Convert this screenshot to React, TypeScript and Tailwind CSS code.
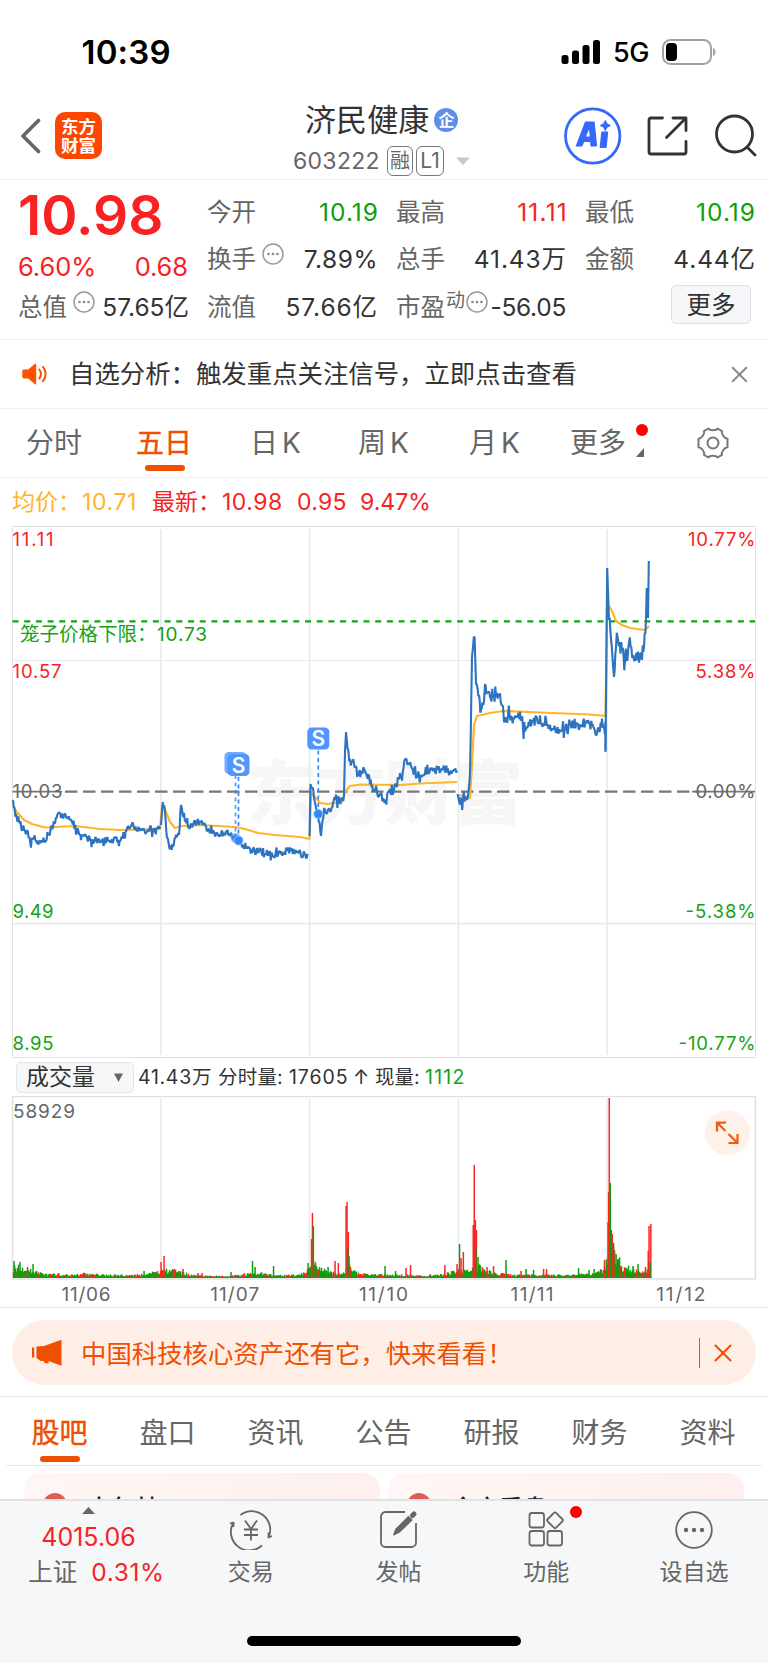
import type { ReactNode } from "react";
import { X } from "lucide-react";

type Point = [number, number];

// seeded noise so the lines stay the same between renders
function createRandom(seed: number) {
  let s = seed;
  return () => {
    s = (s * 16807) % 2147483647;
    return s / 2147483647;
  };
}

// INTRADAY PRICE (one list per trading day)
const priceDays: { amp: number; points: Point[] }[] = [
  { amp: 6.5, points: [[12.5, 800], [14.5, 815], [19, 820], [22, 833], [27, 832], [31, 844], [33, 838], [37, 840], [39, 842], [45, 839], [49, 833], [53, 825], [58, 817], [61, 815], [68, 816], [72, 820], [76, 829], [81, 837], [90, 840], [105, 840], [115, 841], [122, 838], [127, 828], [131, 825], [140, 829], [150, 829], [158, 829], [160, 828]] },
  { amp: 6.5, points: [[161, 825], [162.8, 802], [165, 818], [167, 836], [171, 848], [173, 843], [179, 833], [181, 807], [184, 816], [188, 828], [192, 824], [201, 821], [206, 828], [212, 834], [218, 834], [226, 832], [233, 836], [238, 840], [243, 844], [250, 850], [260, 852], [270, 853], [278, 855], [283, 852], [290, 850], [295, 853], [303, 854], [307.5, 857]] },
  { amp: 7.5, points: [[309.6, 836], [310.5, 784], [314, 796], [318, 815], [321, 832], [324, 812], [330, 810], [336, 798], [341, 803], [344, 796], [345, 752], [346, 732], [347.5, 748], [350, 762], [354, 763], [358, 775], [364, 770], [370, 781], [377, 791], [384, 803], [388, 792], [394, 791], [400, 775], [402, 780], [405, 760], [408, 765], [412, 768], [416, 775], [422, 776], [428, 772], [435, 771], [442, 769], [450, 770], [457, 771]] },
  { amp: 9, points: [[457.5, 794], [459, 801], [463, 799], [467, 801], [470, 775], [472, 660], [473.8, 637], [474.6, 637], [476, 684], [479, 697], [481, 708], [484, 698], [485, 684], [487, 695], [493, 697], [500, 698], [503, 705], [504, 722], [508, 712], [512, 719], [520, 716], [525, 733], [530, 722], [540, 720], [550, 727], [560, 730], [570, 724], [580, 726], [586, 722], [592, 728], [597, 733], [602, 723], [605, 726]] },
  { amp: 11, points: [[605.5, 750], [607.2, 568], [609, 620], [611, 635], [613, 660], [614, 677], [616, 645], [619, 648], [622, 648], [625, 664], [629, 640], [633, 655], [636, 657], [642, 657], [644, 645], [646, 625], [646.7, 588], [648, 618], [648.8, 561]] },
];

const averageDays: Point[][] = [
  [[12.5, 805], [17, 812], [24, 820], [32, 824], [45, 827.5], [75, 826], [100, 829], [120, 830], [160, 829], [162, 806], [165, 809], [170, 822], [175, 828], [182, 826], [200, 825], [235, 827], [245, 829], [258, 833], [275, 835], [300, 837], [309.5, 839], [311, 793], [316, 798], [320, 803], [327, 804], [342, 802], [345, 792], [350, 786], [360, 784.5], [400, 785], [420, 783.5], [457, 782]],
  [[459, 795], [467, 797], [470, 798], [472, 765], [474, 725], [477, 716], [490, 713], [503, 711], [540, 712.5], [590, 714.5], [605.5, 716], [607, 605], [609, 606], [612, 611], [616, 621], [622, 625], [630, 628], [645, 630], [649, 626]],
];

function buildPricePath() {
  const rand = createRandom(77);
  return priceDays.map(({ amp, points }) => {
    let d = `M${points[0][0]} ${points[0][1]}`;
    for (let i = 1; i < points.length; i++) {
      const [x0, y0] = points[i - 1];
      const [x1, y1] = points[i];
      const steps = Math.max(1, Math.round((x1 - x0) / 0.75));
      for (let s = 1; s <= steps; s++) {
        const t = s / steps;
        const noise = steps > 2 ? (rand() - 0.5) * amp * (rand() > 0.85 ? 2.4 : 1.1) : 0;
        d += `L${(x0 + (x1 - x0) * t).toFixed(1)} ${(y0 + (y1 - y0) * t + noise).toFixed(1)}`;
      }
    }
    return d;
  });
}

// VOLUME
const volumeEnvelope: Point[] = [
  [13, 14], [24, 14], [32, 11], [38, 7], [45, 5], [70, 4], [85, 5.5], [100, 4], [140, 4], [155, 7], [165, 9], [171, 12], [178, 7], [184, 6], [195, 3], [230, 2.5], [245, 5], [262, 6], [275, 3], [295, 4], [306, 8], [313, 19], [320, 11], [330, 9], [338, 4], [344, 7], [349, 18], [353, 9], [360, 5], [385, 4], [405, 4], [415, 3], [440, 4], [455, 8], [463, 11], [468, 8], [475, 14], [480, 14], [487, 10], [495, 6], [515, 4], [560, 3.5], [590, 5], [603, 10], [612, 40], [618, 24], [622, 15], [632, 11], [645, 7], [649, 10],
];

const volumeSpikes: [number, number, "r" | "g"][] = [
  [14, 17, "g"], [20, 16, "g"], [33, 14, "g"], [58.5, 5, "r"], [144, 7, "g"], [161, 16, "r"], [164, 22, "r"], [183, 9, "r"], [198, 5, "r"], [202, 5, "r"],
  [231, 6, "g"], [252.5, 17, "g"], [255, 11, "g"], [273.5, 12, "g"], [308, 15, "g"], [311.5, 39, "r"], [312.4, 65, "r"], [313.3, 52, "g"],
  [328, 11, "g"], [335, 17, "r"], [338.3, 15, "r"], [346, 72, "r"], [347, 76, "r"], [348.3, 46, "r"], [347.6, 30, "g"], [349, 22, "g"], [385, 12, "g"],
  [395.5, 7, "g"], [406, 10, "r"], [410.5, 13, "r"], [444.8, 13, "r"], [457, 14, "r"], [459.5, 34, "g"], [461, 20, "r"], [463.3, 26, "r"], [473.2, 53, "r"], [474.2, 113, "r"],
  [475.3, 58, "r"], [476.4, 48, "r"], [475.8, 30, "g"], [478, 21, "g"], [487, 11, "r"], [493.5, 12, "r"], [506, 18, "g"], [521, 7, "r"], [526, 9, "g"], [533.5, 8, "g"],
  [543.5, 9, "r"], [546.5, 9, "r"], [578.5, 10, "g"], [589, 8, "g"], [594, 9, "g"], [604.5, 18, "r"], [608, 56, "r"], [608.6, 86, "r"], [609.2, 180, "r"], [610.2, 95, "g"],
  [611.3, 48, "g"], [612.2, 44, "r"], [613.5, 32, "g"], [616, 24, "g"], [619, 19, "g"], [633, 12, "g"], [638, 14, "g"], [645.5, 11, "r"], [648.2, 27, "r"],
  [649, 52, "r"], [650.8, 54, "r"], [650, 16, "g"],
];

function buildVolumeBars() {
  const rand = createRandom(4211);
  const bars: { x: number; h: number; red: boolean }[] = [];
  for (let x = 13.5; x < 650; x += 1) {
    const i = volumeEnvelope.findIndex(([px]) => px >= x);
    const [x1, h1] = volumeEnvelope[i < 0 ? volumeEnvelope.length - 1 : i];
    const [x0, h0] = volumeEnvelope[Math.max(0, (i < 0 ? volumeEnvelope.length : i) - 1)];
    const t = x1 === x0 ? 1 : Math.min(1, (x - x0) / (x1 - x0));
    const base = h0 + (h1 - h0) * t;
    bars.push({ x, h: Math.max(1.5, base * (0.4 + rand() * 0.6)), red: rand() > 0.7 });
  }
  volumeSpikes.forEach(([x, h, c]) => bars.push({ x, h, red: c === "r" }));
  return bars;
}

const pricePaths = buildPricePath();
const volumeBars = buildVolumeBars();
const dayLines = [161, 309.5, 458.5, 607];
const axisLeft = [
  { y: 545.5, text: "11.11", w: 41, color: "#f82222" },
  { y: 678, text: "10.57", w: 49, color: "#f82222" },
  { y: 798, text: "10.03", w: 50, color: "#666666" },
  { y: 918, text: "9.49", w: 41, color: "#13a313" },
  { y: 1050, text: "8.95", w: 41, color: "#13a313" },
];
const axisRight = [
  { y: 545.5, text: "10.77%", w: 67.5, color: "#f82222" },
  { y: 678, text: "5.38%", w: 60, color: "#f82222" },
  { y: 798, text: "0.00%", w: 60, color: "#666666" },
  { y: 918, text: "-5.38%", w: 70, color: "#13a313" },
  { y: 1050, text: "-10.77%", w: 77, color: "#13a313" },
];

export default function App() {
  return (
    <div className="flex h-[1663px] w-[768px] flex-col overflow-hidden bg-white font-['Inter','Noto_Sans_CJK_SC',sans-serif] text-[#333]">
      <StatusBar />
      <Header />
      <QuotePanel />

      {/* NOTICE */}
      <div className="flex h-[69px] shrink-0 items-center border-b border-[#efefef] pl-[21px] pr-[15px]">
        <svg className="h-6 w-7" viewBox="0 0 28 24" fill="none">
          <path d="M3 7.5h4.2L14 1.800c.6-.5 1.200-.2 1.200.5v19.400c0 .7-.6 1-1.200.5l-6.800-5.700H3c-1 0-1.700-.7-1.700-1.700V9.200c0-1 .7-1.700 1.700-1.700Z" fill="#ff5000" />
          <path d="M18.300 7.500c2 2.700 2 6.300 0 9M22 4.800c3.500 4.300 3.500 10.100 0 14.400" stroke="#ff5000" strokeWidth="2" strokeLinecap="round" />
        </svg>
        <span className="ml-[20px] text-[25.4px] leading-none text-[#333]">自选分析：触发重点关注信号，立即点击查看</span>
        <X className="ml-auto size-[27px] text-[#888]" strokeWidth={1.7} />
      </div>

      <PeriodTabs />

      {/* CHART LEGEND */}
      <div className="flex h-[48px] shrink-0 items-center pl-[12px] pt-px text-[23px] leading-none">
        <span className="w-[70px] text-[#ffb52b]">均价：</span>
        <span className="w-[70px] tracking-[0.6px] text-[#ffb52b]">10.71</span>
        <span className="w-[70px] text-[#f82222]">最新：</span>
        <span className="w-[75px] tracking-[0.5px] text-[#f82222]">10.98</span>
        <span className="w-[63px] tracking-[0.3px] text-[#f82222]">0.95</span>
        <span className="text-[#f82222]">9.47%</span>
      </div>

      <PriceChart />

      {/* VOLUME TOOLBAR */}
      <div className="flex h-[38px] shrink-0 items-center pl-[16px] text-[19.5px] leading-none">
        <div className="mr-[4px] flex h-[31px] w-[118px] items-center rounded-[5px] border border-[#e2e4e8] bg-[#f6f7f9] pl-[9px] pt-px text-[23px]">
          成交量
          <svg className="ml-[19px] h-[9px] w-[9px]" viewBox="0 0 9 9">
            <path d="M0 .5h9L4.500 9Z" fill="#666" />
          </svg>
        </div>
        <div className="flex pt-[2px]">
          <span className="w-[80px] tracking-[0.7px]">41.43万</span>
          <span className="w-[71px] tracking-[0.2px]">分时量:</span>
          <span className="w-[64px] tracking-[0.9px]">17605</span>
          <span className="w-[22px]">↑</span>
          <span className="w-[50px]">现量:</span>
          <span className="tracking-[1.200px] text-[#13a313]">1112</span>
        </div>
      </div>

      <VolumeChart />

      {/* BANNER */}
      <div className="h-[89px] shrink-0 border-b border-[#e8eaee] px-3 pt-[12px]">
        <div className="flex h-[65px] items-center rounded-[33px] bg-[#feeee6] pl-[19px] pr-[18px] text-[#ee5000]">
          <svg className="h-[28px] w-[32px]" viewBox="0 0 32 28" fill="#ee5000">
            <path d="M1 8.500h2.200v10H1ZM5.500 7.500 13 7 30.500.800v26L17.500 22v2.300h-3.800l-1-2.300H9.500L5.500 19Z" />
          </svg>
          <span className="ml-[18px] pt-[3px] text-[25.400px] leading-none">中国科技核心资产还有它，快来看看！</span>
          <span className="ml-auto h-[30px] w-[1.500px] bg-[#ee5000]" />
          <X className="ml-[8px] size-[30px]" strokeWidth={1.6} />
        </div>
      </div>

      <SectionTabs />

      <div className="flex h-[33px] shrink-0 gap-[8px] overflow-hidden pl-[24px] pt-[7px]">
        <FeedCard title="大包林" />
        <FeedCard title="全方看盘" />
      </div>

      <BottomBar />
    </div>
  );
}

function StatusBar() {
  return (
    <div className="flex h-[92px] shrink-0 items-center pl-[81.500px] pr-[52px] pt-[11px]">
      <span className="pt-px text-[33px] font-semibold leading-none tracking-[0.2px] text-black">10:39</span>
      <svg className="ml-auto h-[26px] w-[40px]" viewBox="0 0 40 26">
        <rect x="0.500" y="16" width="7" height="9" rx="2.500" />
        <rect x="11" y="11.500" width="7" height="13.500" rx="2.500" />
        <rect x="21.500" y="6" width="7" height="19" rx="2.500" />
        <rect x="32" y="1" width="7" height="24" rx="2.500" />
      </svg>
      <span className="ml-[12px] w-[49px] pt-[2px] text-[27px] font-medium leading-none tracking-[-0.500px] text-black">5G</span>
      <svg className="h-[26px] w-[54px]" viewBox="0 0 54 26">
        <rect x="1" y="1" width="48" height="24" rx="7.500" fill="none" stroke="#a3a3a3" strokeWidth="2" />
        <rect x="4" y="4" width="11" height="18" rx="4" />
        <path d="M51 9c3.300.800 3.300 7.200 0 8Z" fill="#a3a3a3" />
      </svg>
    </div>
  );
}

function Header() {
  return (
    <div className="flex h-[88px] shrink-0 items-center border-b-[1.500px] border-[#ededed] pl-[20px]">
      <svg className="h-[36px] w-[22px]" viewBox="0 0 22 36" fill="none">
        <path d="M18.500 2.500 3 18l15.500 15.500" stroke="#666" strokeWidth="3.600" strokeLinecap="round" strokeLinejoin="round" />
      </svg>
      <div className="ml-[13px] flex size-[47px] flex-col items-center justify-center rounded-[10px] bg-[#ff4600] text-[17.500px] font-bold leading-[19px] text-white">
        <span>东方</span>
        <span>财富</span>
      </div>
      <div className="ml-[191px] flex w-[180px] flex-col pt-[6px]">
        <div className="flex items-center pl-[12px]">
          <span className="text-[31px] leading-[36px] tracking-[0.100px]">济民健康</span>
          <span className="ml-[5px] flex size-[24px] items-center justify-center rounded-full bg-[#5f8eea] text-[16px] font-bold leading-none text-white">企</span>
        </div>
        <div className="mt-[8px] flex items-center text-[#666]">
          <span className="w-[94px] pt-px text-[23px] leading-none tracking-[0.300px]">603222</span>
          <span className="mr-[3px] flex h-[30px] w-[26px] items-center justify-center rounded-[6px] border-[1.500px] border-[#777] text-[20px] leading-none">融</span>
          <span className="flex h-[30px] w-[28px] items-center justify-center rounded-[6px] border-[1.500px] border-[#777] text-[21px] leading-none">L1</span>
          <svg className="ml-[12px] h-[8px] w-[14px]" viewBox="0 0 14 8">
            <path d="M0 .500h14L7 8Z" fill="#c8c8c8" />
          </svg>
        </div>
      </div>
      <svg className="ml-[91px] size-[58px]" viewBox="0 0 58 58" fill="none">
        <circle cx="28.700" cy="29" r="27.200" stroke="#3568fb" strokeWidth="2.800" />
        <path d="M11.500 39.500 20.500 16c.3-1 .8-1.400 1.800-1.400h7c1 0 1.400.5 1.500 1.400L33 38c.1 1-.4 1.500-1.300 1.500h-5.200l-.4-4.500h-6l-1.400 3.600c-.3.700-.7.900-1.300.9ZM22 29.500h3.700L25 22.500Z" fill="#3568fb" fillRule="evenodd" />
        <path d="M38.500 24.500h4.800c.7 0 1 .4.900 1L42.700 40c-.1.700-.5 1-1.100 1h-5c-.7 0-1-.4-.9-1l1.500-14.500c.1-.7.600-1 1.300-1Z" fill="#3568fb" />
        <path d="M41.300 13.500 43 16.800l3.300 1.700-3.300 1.700-1.700 3.300-1.700-3.300-3.300-1.700 3.300-1.700Z" fill="#3568fb" stroke="#3568fb" strokeLinejoin="round" />
      </svg>
      <svg className="ml-[25px] size-[42px]" viewBox="0 0 42 42" fill="none" stroke="#333" strokeWidth="2.800" strokeLinecap="round" strokeLinejoin="round">
        <path d="M15.500 3H4A2 2 0 0 0 2 5v32a2 2 0 0 0 2 2h33a2 2 0 0 0 2-2V26.500" />
        <path d="M26 3h13v12.500M38 4l-18.500 18.500" />
      </svg>
      <svg className="ml-[25px] size-[44px]" viewBox="0 0 44 44" fill="none" stroke="#333" strokeWidth="2.800" strokeLinecap="round">
        <circle cx="20.500" cy="20" r="18" />
        <path d="m33.500 33.500 7.500 7.500" />
      </svg>
    </div>
  );
}

function DotsIcon() {
  return (
    <svg className="h-[22px] w-[22px]" viewBox="0 0 22 22" fill="none">
      <circle cx="11" cy="11" r="10" stroke="#999" strokeWidth="1.500" />
      <circle cx="6.500" cy="11" r="1.300" fill="#888" />
      <circle cx="11" cy="11" r="1.300" fill="#888" />
      <circle cx="15.500" cy="11" r="1.300" fill="#888" />
    </svg>
  );
}

function QuoteItem({ label, value, color = "tracking-[0.900px] -mr-px text-[#333]", extra }: { label: string; value: string; color?: string; extra?: ReactNode }) {
  return (
    <div className="flex h-[47.500px] items-center justify-between">
      <span className="flex items-center text-[#666]">
        {label}
        {extra}
      </span>
      <span className={color}>{value}</span>
    </div>
  );
}

function QuotePanel() {
  const dots = <span className="-mt-[10px] ml-[6px]"><DotsIcon /></span>;
  return (
    <div className="grid h-[160px] shrink-0 grid-cols-[170px_170px_170px_170px] gap-x-[19px] border-b border-[#efefef] pl-[18px] pt-[8px] text-[24.500px] leading-none">
      <div>
        <p className="h-[54px] text-[55px] font-semibold leading-[54px] text-[#f82222]">10.98</p>
        <div className="flex h-[41px] items-end justify-between pb-[3.500px] text-[25.500px] tracking-[-0.100px] text-[#f82222]">
          <span>6.60%</span>
          <span>0.68</span>
        </div>
        <QuoteItem label="总值" value="57.65亿" color="text-[#333] -mr-px" extra={dots} />
      </div>
      <div>
        <QuoteItem label="今开" value="10.19" color="tracking-[1px] -mr-[2px] text-[#0aa00a]" />
        <QuoteItem label="换手" value="7.89%" color="tracking-[0.500px] -mr-px text-[#333]" extra={dots} />
        <QuoteItem label="流值" value="57.66亿" />
      </div>
      <div>
        <QuoteItem label="最高" value="11.11" color="tracking-[1.200px] -mr-[2px] text-[#f82222]" />
        <QuoteItem label="总手" value="41.43万" />
        <QuoteItem
          label="市盈"
          value="-56.05"
          color="tracking-[-0.300px] text-[#333]"
          extra={
            <span className="-mt-[12px] ml-[1px] flex items-center text-[19px]">
              动<span className="ml-px mt-[2px]"><DotsIcon /></span>
            </span>
          }
        />
      </div>
      <div>
        <QuoteItem label="最低" value="10.19" color="tracking-[1px] -mr-px text-[#0aa00a]" />
        <QuoteItem label="金额" value="4.44亿" />
        <div className="ml-auto mr-[4px] mt-[2px] flex h-[39px] w-[80px] items-center justify-center rounded-[5px] border border-[#dcdfe5] bg-[#f6f7f9] pt-px">更多</div>
      </div>
    </div>
  );
}

function PeriodTabs() {
  return (
    <div className="flex h-[69px] shrink-0 items-center border-b border-[#efefef] pl-[26px] text-[28px] leading-none text-[#666] [word-spacing:-4px]">
      <span className="w-[110px]">分时</span>
      <span className="relative w-[114px] text-[#ee5000] [-webkit-text-stroke:0.4px_#ee5000]">
        五日
        <span className="absolute -bottom-[14px] left-[9px] h-[6px] w-[40px] rounded-[3px] bg-[#ee5000]" />
      </span>
      <span className="w-[108px]">日 K</span>
      <span className="w-[111px]">周 K</span>
      <span className="w-[101px]">月 K</span>
      <span className="relative w-[126px]">
        更多
        <span className="absolute -top-[5px] left-[66px] size-[12px] rounded-full bg-[#ff0000]" />
        <svg className="absolute left-[66px] top-[19px] h-[9px] w-[8px]" viewBox="0 0 8 9">
          <path d="M8 0v9H0Z" fill="#666" />
        </svg>
      </span>
      <svg className="size-[34px]" viewBox="0 0 34 34" fill="none" stroke="#777" strokeWidth="2">
        <circle cx="17" cy="17" r="5.500" />
        <path d="M12.500 2.500c1.300 2.300 7.700 2.300 9 0l4.500 2.600c-1 2.500 2 7.400 5.500 7.600v8.600c-3.500.200-6.500 5.100-5.500 7.600l-4.500 2.600c-1.300-2.300-7.700-2.300-9 0L8 28.900c1-2.500-2-7.400-5.500-7.600v-8.600C6 12.500 9 7.600 8 5.100Z" strokeLinejoin="round" />
      </svg>
    </div>
  );
}

function SignalMark({ x, y, bottom, opacity = 1 }: { x: number; y: number; bottom: number; opacity?: number }) {
  return (
    <g opacity={opacity}>
      <path d={`M${x} ${y + 12}V${bottom}`} stroke="#2f88ff" strokeWidth="1.700" strokeDasharray="4 3.500" />
      <rect x={x - 11} y={y - 11} width="22" height="22" rx="4.500" fill="#4f97ff" />
      <text x={x} y={y + 7.5} fontSize="21" fontWeight="600" fill="#fff" textAnchor="middle">S</text>
      <circle cx={x} cy={bottom} r="4.500" fill="#2f88ff" stroke="#8abaff" />
    </g>
  );
}

function PriceChart() {
  return (
    <svg className="h-[532px] w-[768px] shrink-0" viewBox="0 526 768 532" fill="none">
      <rect x="12.500" y="526.500" width="743" height="531" stroke="#dfe1e5" />
      <text x="247" y="819" fontSize="70" fontWeight="900" fill="#f6f6f6" textLength="276">东方财富</text>
      {dayLines.map((x) => (
        <path key={x} d={`M${x} 529V1055`} stroke="#e6e9f0" strokeWidth="1.600" />
      ))}
      <path d="M13 660.500H755" stroke="#e6e9f0" />
      <path d="M13 923.700H755" stroke="#e6e9f0" strokeWidth="1.800" />
      <path d="M12.500 621.300H755" stroke="#13a313" strokeWidth="2.200" strokeDasharray="6 5.700" />
      <path d="M65 791.700H700" stroke="#777" strokeWidth="2.200" strokeDasharray="12.500 5.500" />
      <path d="M12.500 791.700H62M692 791.700H755" stroke="#777" strokeWidth="1.800" />

      {averageDays.map((points, i) => (
        <polyline key={i} points={points.map((p) => p.join(",")).join(" ")} stroke="#ffb52b" strokeWidth="2.200" strokeLinejoin="round" />
      ))}
      {pricePaths.map((d, i) => (
        <path key={i} d={d} stroke="#2c73c0" strokeWidth="2.100" strokeLinejoin="bevel" />
      ))}
      <path d="M605.500 722V752" stroke="#2c73c0" strokeWidth="2" />

      <SignalMark x={235.500} y={763} bottom={838} opacity={0.8} />
      <SignalMark x={238.500} y={765} bottom={840.500} />
      <SignalMark x={318.300} y={738.500} bottom={814} />

      <text x="20" y="640.5" fontSize="19.500" fill="#13a313">笼子价格下限：</text>
      <text x="157" y="640.5" fontSize="19" fill="#13a313" textLength="50">10.73</text>
      {axisLeft.map((a) => (
        <text key={a.text} x="12.500" y={a.y} fontSize="18.500" fill={a.color} textLength={a.w}>{a.text}</text>
      ))}
      {axisRight.map((a) => (
        <text key={a.text} x={755.5 - a.w} y={a.y} fontSize="18.500" fill={a.color} textLength={a.w}>{a.text}</text>
      ))}
    </svg>
  );
}

function VolumeChart() {
  const dates = ["11/06", "11/07", "11/10", "11/11", "11/12"];
  return (
    <svg className="h-[212px] w-[768px] shrink-0" viewBox="0 1096 768 212" fill="none">
      <path d="M12.500 1279V1096.500H755.500V1279Z" stroke="#dfe1e5" strokeWidth="1.500" />
      {dayLines.map((x) => (
        <path key={x} d={`M${x} 1099V1278`} stroke="#e6e9f0" strokeWidth="1.600" />
      ))}
      {volumeBars.map((b, i) => (
        <rect key={i} x={b.x - 0.7} y={1278 - b.h} width="1.500" height={b.h} fill={b.red ? "#ff2424" : "#0aa00a"} />
      ))}
      <text x="13" y="1117.5" fontSize="19" fill="#666" textLength="62">58929</text>
      {dates.map((d, i) => (
        <text key={d} x={61.5 + i * 148.7} y="1301" fontSize="19" fill="#666" textLength={d === "11/11" ? 43 : 49} dx={d === "11/11" ? 3 : 0}>{d}</text>
      ))}
      <path d="M0 1307.500H768" stroke="#e3e5e9" />
      <circle cx="727.300" cy="1132.700" r="22.500" fill="#fef1ea" />
      <path d="M717 1131.500v-8.800h9M717.500 1123l8 8M728.500 1143h9V1134M737 1142.500l-8.500-8.500" stroke="#f25c0a" strokeWidth="2.200" />
    </svg>
  );
}

function SectionTabs() {
  const tabs = ["股吧", "盘口", "资讯", "公告", "研报", "财务", "资料"];
  return (
    <div className="mx-[6px] flex h-[69px] shrink-0 items-center gap-[52px] border-b-[1.500px] border-[#e8eaee] pl-[25.500px] pt-[3px] text-[28px] leading-none text-[#666]">
      {tabs.map((tab, i) => (
        <span key={tab} className={i === 0 ? "relative text-[#ee5000] [-webkit-text-stroke:0.4px_#ee5000]" : undefined}>
          {tab}
          {i === 0 && <span className="absolute -bottom-[15px] left-[8px] h-[6px] w-[40px] rounded-[3px] bg-[#ee5000]" />}
        </span>
      ))}
    </div>
  );
}

function FeedCard({ title }: { title: string }) {
  return (
    <div className="flex h-[80px] w-[356px] shrink-0 items-start rounded-[16px] bg-linear-to-r from-[#fff7f5] to-[#fdf0ee] pl-[19px] pt-[20px]">
      <span className="size-[24px] rounded-full bg-[#df5f58]" />
      <span className="ml-[20px] mt-[4px] text-[24px] font-medium leading-none text-[#222]">{title}</span>
    </div>
  );
}

function NavItem({ label, dot, children }: { label: string; dot?: boolean; children: ReactNode }) {
  return (
    <div className="flex w-[147.700px] flex-col items-center">
      <span className="relative">
        <svg className="h-[40px] w-[44px]" viewBox="0 0 44 40" fill="none" stroke="#666" strokeWidth="1.800" strokeLinejoin="round">
          {children}
        </svg>
        {dot && <span className="absolute -right-[14px] -top-[4px] size-[12px] rounded-full bg-[#ff0000]" />}
      </span>
      <span className="mt-[11px] text-[23px] leading-none text-[#666]">{label}</span>
    </div>
  );
}

function BottomBar() {
  return (
    <div className="flex h-[165px] shrink-0 flex-col border-t-2 border-[#e0e2e5] bg-[#f6f7f9]">
      <div className="flex h-[100px]">
        <div className="flex w-[177px] flex-col items-center pt-[6px]">
          <svg className="h-[7px] w-[13px]" viewBox="0 0 13 7">
            <path d="M6.500 0 13 7H0Z" fill="#666" />
          </svg>
          <span className="mt-[11px] text-[25px] leading-none text-[#f82222]">4015.06</span>
          <span className="mt-[10px] flex gap-[14px] pl-[16px] text-[24.500px] leading-none text-[#666]">
            上证 <span className="tracking-[0.600px] text-[#f82222]">0.31%</span>
          </span>
        </div>
        <div className="flex pt-[9px]">
          <NavItem label="交易">
            <path d="M11.500 5A18.500 18.500 0 0 1 39.500 27.500L43 26M39.500 27.500v-5M33 35.500A18.500 18.500 0 0 1 4.500 12.500L1 13.500M4.500 12.500V17" />
            <path d="m16 10.500 6 8.500 6-8.500M22 19v11.500M15 19.500h14M15 25h14" />
          </NavItem>
          <NavItem label="发帖">
            <path d="M28 2H8.500A4.500 4.500 0 0 0 4 6.500v26A4.500 4.500 0 0 0 8.500 37h26a4.500 4.500 0 0 0 4.500-4.500V13" />
            <path d="m17 24.500 2-5L31.500 7l3 3-12.500 12Z" fill="#666" />
            <path d="m35.500 5.500 1.500-1.500" strokeWidth="5" strokeLinecap="round" />
          </NavItem>
          <NavItem label="功能" dot>
            <rect x="5.500" y="3" width="14.500" height="14.500" rx="2.500" />
            <rect x="5.500" y="21" width="14.500" height="14.500" rx="2.500" />
            <rect x="23.500" y="21" width="14.500" height="14.500" rx="2.500" />
            <rect x="25" y="4.300" width="12" height="12" rx="1.500" transform="rotate(45 31 10.300)" />
          </NavItem>
          <NavItem label="设自选">
            <circle cx="22" cy="20" r="17.800" />
            <circle cx="14" cy="20" r="1.300" fill="#666" />
            <circle cx="22" cy="20" r="1.300" fill="#666" />
            <circle cx="30" cy="20" r="1.300" fill="#666" />
          </NavItem>
        </div>
      </div>
      <div className="mx-auto mt-[35px] h-[10px] w-[274px] rounded-full bg-black" />
    </div>
  );
}
